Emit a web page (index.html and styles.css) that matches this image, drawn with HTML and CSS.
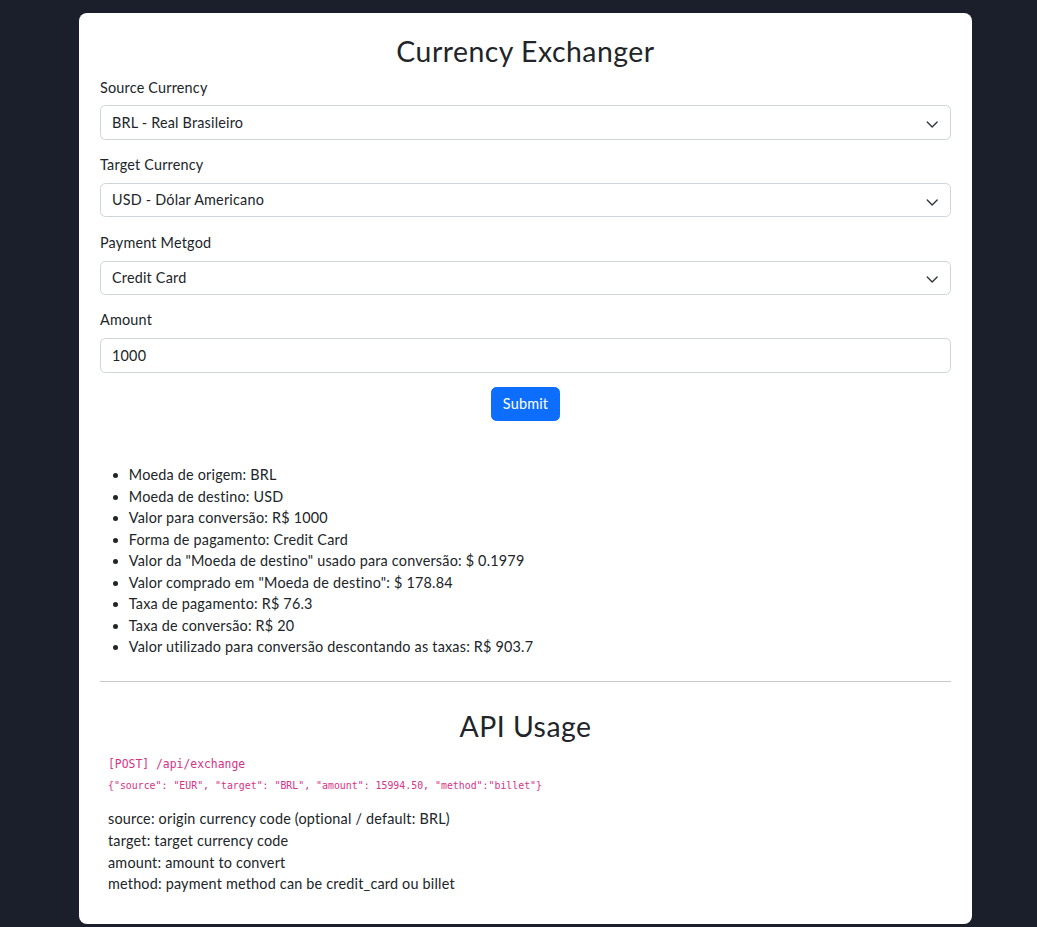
FILE: index.html
```html
<!DOCTYPE html>
<html lang="pt-BR">
<head>
<meta charset="utf-8">
<title>Currency Exchanger</title>
<link rel="stylesheet" href="styles.css">
</head>
<body>
<main class="card">
  <h2 class="title">Currency Exchanger</h2>
  <form class="form">
    <div class="field">
      <label class="label">Source Currency</label>
      <div class="select"><span>BRL - Real Brasileiro</span><svg class="chev" viewBox="0 0 16 12" width="14.4" height="10.8"><path d="m2.5 5.5 5.5 5.5 5.5-5.5" fill="none" stroke="#343a40" stroke-width="1.6" stroke-linecap="round" stroke-linejoin="round"/></svg></div>
    </div>
    <div class="field">
      <label class="label">Target Currency</label>
      <div class="select"><span>USD - Dólar Americano</span><svg class="chev" viewBox="0 0 16 12" width="14.4" height="10.8"><path d="m2.5 5.5 5.5 5.5 5.5-5.5" fill="none" stroke="#343a40" stroke-width="1.6" stroke-linecap="round" stroke-linejoin="round"/></svg></div>
    </div>
    <div class="field">
      <label class="label">Payment Metgod</label>
      <div class="select"><span>Credit Card</span><svg class="chev" viewBox="0 0 16 12" width="14.4" height="10.8"><path d="m2.5 5.5 5.5 5.5 5.5-5.5" fill="none" stroke="#343a40" stroke-width="1.6" stroke-linecap="round" stroke-linejoin="round"/></svg></div>
    </div>
    <div class="field">
      <label class="label">Amount</label>
      <div class="input">1000</div>
    </div>
    <div class="actions"><button type="button" class="btn">Submit</button></div>
  </form>
  <ul class="results">
    <li>Moeda de origem: BRL</li>
    <li>Moeda de destino: USD</li>
    <li>Valor para conversão: R$ 1000</li>
    <li>Forma de pagamento: Credit Card</li>
    <li>Valor da "Moeda de destino" usado para conversão: $ 0.1979</li>
    <li>Valor comprado em "Moeda de destino": $ 178.84</li>
    <li>Taxa de pagamento: R$ 76.3</li>
    <li>Taxa de conversão: R$ 20</li>
    <li>Valor utilizado para conversão descontando as taxas: R$ 903.7</li>
  </ul>
  <hr class="sep">
  <h2 class="title api-title">API Usage</h2>
  <section class="api">
    <code class="code code-lg">[POST] /api/exchange</code>
    <code class="code code-sm">{"source": "EUR", "target": "BRL", "amount": 15994.50, "method":"billet"}</code>
    <div class="api-desc">
      <p>source: origin currency code (optional / default: BRL)</p>
      <p>target: target currency code</p>
      <p>amount: amount to convert</p>
      <p>method: payment method can be credit_card ou billet</p>
    </div>
  </section>
</main>
</body>
</html>
```
FILE: styles.css
```css
* { box-sizing: border-box; }
html, body { margin: 0; padding: 0; }
body {
  background: #1b1f2b;
  font-family: Lato, "Noto Sans", sans-serif;
  font-size: 14.4px;
  line-height: 1.5;
  letter-spacing: 0.2px;
  color: #212529;
  min-height: 927px;
}
.card {
  width: 893px;
  margin: 13px 0 0 79px;
  background: #fff;
  border-radius: 8px;
  padding: 21px 21px 29.5px;
}
.title {
  margin: 0 0 8.5px;
  font-size: 28.4px;
  font-weight: 400;
  line-height: 1.2;
  letter-spacing: 0.5px;
  text-align: center;
}
.field { margin-bottom: 14.4px; }
.label {
  display: block;
  margin-bottom: 7.2px;
}
.select, .input {
  height: 34.4px;
  border: 1px solid #ced4da;
  border-radius: 5.4px;
  padding: 0 10.8px 0 11px;
  display: flex;
  align-items: center;
  justify-content: space-between;
}
.chev { display: block; }
.actions {
  display: flex;
  justify-content: center;
}
.btn {
  font-family: inherit;
  font-size: 14.4px;
  line-height: 1.5;
  letter-spacing: 0.2px;
  color: #fff;
  background: #0d6efd;
  border: 1px solid #0d6efd;
  border-radius: 5.4px;
  padding: 4.6px 10.8px;
  height: 34px;
}
.results {
  margin: 43.5px 0 0;
  padding-left: 28.8px;
}
.results li { line-height: 21.5px; }
.sep {
  margin: 23px 0 0;
  border: 0;
  border-top: 1px solid #c8c9ca;
}
.api-title { margin-top: 27px; }
.api { padding-left: 8px; }
.code {
  display: block;
  font-family: "DejaVu Sans Mono", "Liberation Mono", monospace;
  letter-spacing: 0;
  color: #d63384;
  line-height: 21px;
}
.code-lg { font-size: 11.4px; margin-top: 11.5px; }
.code-sm { font-size: 9.9px; }
.api-desc { margin-top: 12px; }
.api-desc p { margin: 0; line-height: 21.6px; }
```
